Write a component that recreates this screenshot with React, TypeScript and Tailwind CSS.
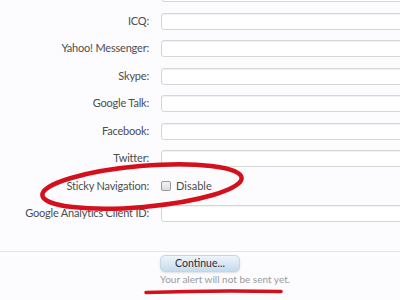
const fields = [
  { label: '', input: true },
  { label: 'ICQ:', input: true },
  { label: 'Yahoo! Messenger:', input: true },
  { label: 'Skype:', input: true },
  { label: 'Google Talk:', input: true },
  { label: 'Facebook:', input: true },
  { label: 'Twitter:', input: true },
  { label: 'Sticky Navigation:', input: false },
  { label: 'Google Analytics Client ID:', input: true },
];

const Row = ({ label, input }: { label: string; input: boolean }) => (
  <div className="flex h-[27.5px] items-start">
    <div className="flex h-[17px] w-[149px] shrink-0 items-center justify-end text-[11px] tracking-[-0.2px] text-[#4d4d4d]">
      {label}
    </div>
    <div className="ml-[12px] flex-1">
      {input ? (
        <div className="h-[17px] w-[260px] rounded-[3px] border border-[#d6d6d6] bg-white shadow-[inset_0_1px_1px_rgba(0,0,0,0.06)]" />
      ) : (
        <label className="flex h-[17px] items-center gap-[5px] text-[11px] text-[#4d4d4d]">
          <span className="h-[10px] w-[10px] rounded-[2px] border border-[#9a9a9a] bg-gradient-to-b from-[#f4f4f4] to-[#dcdcdc]" />
          Disable
        </label>
      )}
    </div>
  </div>
);

export default function App() {
  return (
    <div className="relative h-[300px] w-[400px] overflow-hidden bg-[#fcfcfe] font-['Lato',sans-serif]">
      <div className="-mt-[15px]">
        {fields.map((f, i) => (
          <Row key={i} label={f.label} input={f.input} />
        ))}
      </div>

      <div className="mt-[18px] border-t border-[#d9ebf0]" />

      <div className="ml-[160px] mt-[3px] flex flex-col items-start">
        <button className="h-[17px] w-[80px] rounded-[5px] border border-[#c3d5e6] bg-gradient-to-b from-[#eef4fa] to-[#c6dbed] text-[10.5px] leading-none text-[#2b2b3b] shadow-[0_1px_2px_rgba(0,0,0,0.12)]">
          Continue...
        </button>
        <div className="mt-[1px] text-[10px] leading-[12px] text-[#9a9a9a]">
          Your alert will not be sent yet.
        </div>
      </div>

      <svg className="pointer-events-none absolute left-0 top-0" width="400" height="300">
        <ellipse
          cx="142"
          cy="186.5"
          rx="100"
          ry="20.5"
          transform="rotate(-5 142 186.5)"
          fill="none"
          stroke="#d4101c"
          strokeWidth="4.5"
        />
        <path
          d="M146 292.5 Q 214 290 281 291.5"
          fill="none"
          stroke="#d4101c"
          strokeWidth="3.5"
          strokeLinecap="round"
        />
      </svg>
    </div>
  );
}
